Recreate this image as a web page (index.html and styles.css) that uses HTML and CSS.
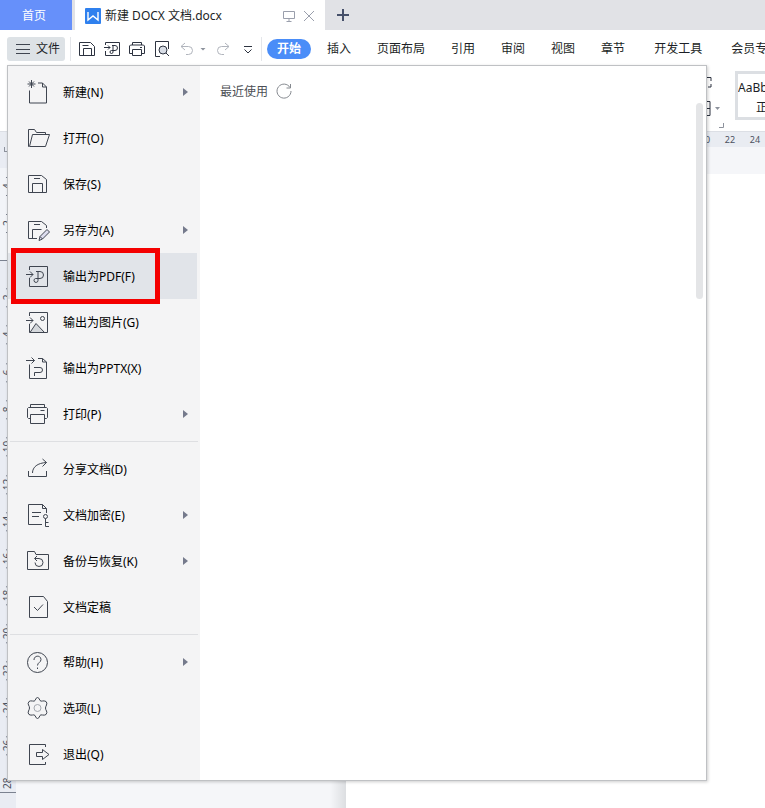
FILE: index.html
```
<!DOCTYPE html>
<html lang="zh-CN">
<head>
    <meta charset="UTF-8">
    <meta name="viewport" content="width=device-width, initial-scale=1.0">
    <title>新建 DOCX 文档.docx</title>
    <link rel="stylesheet" href="styles.css">
</head>
<body>
    <header class="tabs">
        <button class="home-tab" type="button">首页</button>
        <div class="doc-tab">
            <svg class="logo" viewBox="0 0 16 16"><rect width="16" height="16" rx="1" fill="#2f80ee"/><path d="M3 4v8l5-4 5 4V4" fill="none" stroke="#fff" stroke-width="1.4"/></svg>
            <span class="doc-name">新建 DOCX 文档.docx</span>
            <svg class="tab-icon" viewBox="0 0 12 12"><path d="M.5 1.5h11v7H.5zM6 8.5v3M3.5 11.5h5"/></svg>
            <button class="close" type="button" aria-label="关闭">
                <svg class="tab-icon" viewBox="0 0 12 12"><path d="M1 1l10 10M11 1L1 11"/></svg>
            </button>
        </div>
        <button class="add-tab" type="button" aria-label="新建标签">
            <svg viewBox="0 0 12 12"><path d="M6 0v12M0 6h12"/></svg>
        </button>
    </header>

    <nav class="menubar">
        <button class="file-btn" type="button">
            <svg viewBox="0 0 14 12"><path d="M0 1.5h14M0 6.5h14M0 10.5h14"/></svg>
            文件
        </button>
        <div class="quick">
            <button type="button" aria-label="保存"><svg viewBox="0 0 16 16"><path d="M.5 1.5h11l4 4v9H.5zM4.5 14.5v-7h8v7M3.5 4.5h6"/></svg></button>
            <button type="button" aria-label="输出为PDF"><svg viewBox="0 0 16 16"><path d="M1.500 4V1.500h14v13h-14V10M0 6.500h6M4 4.500l2 2-2 2M8 4.500h3a2.500 2.500 0 0 1 0 5H7.500a1.500 1.500 0 1 0 1.500 1.500V4.500"/></svg></button>
            <button type="button" aria-label="打印"><svg viewBox="0 0 16 16"><path d="M3.500 4V1.500h9V4M3.500 12.500h-3V5l1-1h13l1 1v7.500h-3M3.500 8.500h9v6h-9zM11 6.500h2"/></svg></button>
            <button type="button" aria-label="打印预览"><svg viewBox="0 0 16 16"><path d="M6 15.500H1.500v-15h13V8M12 12l3 3"/><circle cx="9" cy="9" r="4" fill="#d8dde6"/></svg></button>
            <button class="pale" type="button" aria-label="撤销"><svg viewBox="0 0 16 16"><path d="M6 2L2 5.500l4 3.500M2 5.500h7.500a4 4 0 0 1 0 8H7"/></svg></button>
            <button class="caret" type="button" aria-label="撤销列表"></button>
            <button class="pale" type="button" aria-label="恢复"><svg viewBox="0 0 16 16"><path d="M10 2l4 3.500L10 9M14 5.500H6.500a4 4 0 0 0 0 8H9"/></svg></button>
            <button type="button" aria-label="更多"><svg viewBox="0 0 16 16"><path d="M4 5.500h8M4.500 8.500L8 12l3.500-3.500"/></svg></button>
        </div>
        <div class="ribbon-tabs">
            <a class="current" href="#">开始</a>
            <a href="#">插入</a>
            <a href="#">页面布局</a>
            <a href="#">引用</a>
            <a href="#">审阅</a>
            <a href="#">视图</a>
            <a href="#">章节</a>
            <a class="wide" href="#">开发工具</a>
            <a class="wide" href="#">会员专</a>
        </div>
    </nav>

    <main class="workspace">
        <section class="ribbon">
            <svg class="ribbon-tools" viewBox="0 0 28 64"><path d="M5 12.500h6V16M11 19v3H8M0 36.500h10v14H0M5 43.500h5"/><path class="grey" d="M23.500 58v4.500H19"/><path class="down" d="M15 42h5l-2.500 3z"/></svg>
            <button class="style-card" type="button"><span>AaBb</span><span class="style-name">正</span></button>
        </section>
        <div class="ruler-top"><span>20</span><span>22</span><span>24</span></div>
        <div class="desk">
            <div class="ruler-left">
                <div class="tab-stop"></div>
                <div class="margin-part"><i>4</i><i>2</i></div>
                <div class="text-part">
                    <i>2</i><i>4</i><i>6</i><i>8</i><i>10</i><i>12</i><i>14</i>
                    <i>16</i><i>18</i><i>20</i><i>22</i><i>24</i><i>26</i><i>28</i>
                </div>
            </div>
            <div class="gutter"></div>
            <div class="paper"></div>
        </div>

        <div class="file-menu">
            <div class="commands">
                <button class="item more" type="button"><svg viewBox="0 0 26 26"><path d="M4.500 11.500V24h17V8l-4-4H13M17.500 4v4h4M6.500 1v8M2.500 5h8M4 2.500l5 5M9 2.500l-5 5"/></svg><span>新建(N)</span></button>
                <button class="item" type="button"><svg viewBox="0 0 26 26"><path d="M4 21.500h-.500v-17h6l2 3h9v2M4.500 21.500L7.500 9.500h17l-4 12z"/></svg><span>打开(O)</span></button>
                <button class="item" type="button"><svg viewBox="0 0 26 26"><path d="M3.500 4.500h13l5 4v13h-18zM7.500 21.500v-9h10v9M9 7.500h6"/></svg><span>保存(S)</span></button>
                <button class="item more" type="button"><svg viewBox="0 0 26 26"><path d="M12 21.500H3.500v-17h13l5 4V11M7.500 21.500v-9h9M9 7.500h6"/><path d="M14 23.500l1-4 7-7 2.500 2.500-7 7zM15 19.500l2.500 2.500" fill="#dde"/></svg><span>另存为(A)</span></button>
                <button class="item active" type="button"><svg viewBox="0 0 26 26"><path d="M4.500 7V3.500h18v20h-18V15M1 11.500h7M5 8.500l3 3-3 3M11 8.500h4a3.500 3.500 0 0 1 0 7h-4.500a2 2 0 1 0 2.500 2V8.500"/></svg><span>输出为PDF(F)</span></button>
                <button class="item" type="button"><svg viewBox="0 0 26 26"><path d="M5 23.500l6-9 8.500 9z" fill="#d5d8dc"/><path d="M4.500 7V3.500h18v20h-18V15M1 11.500h7M5 8.500l3 3-3 3"/><circle cx="17.500" cy="9.500" r="2"/></svg><span>输出为图片(G)</span></button>
                <button class="item" type="button"><svg viewBox="0 0 26 26"><path d="M4.500 9.500v14h17V7l-4-3.500H13M17.500 3.500V7h4M1 5.500h8.500M6.500 2.500l3 3-3 3M9 12.500h6a2 2 0 0 1 0 5H9.500v3.500"/></svg><span>输出为PPTX(X)</span></button>
                <button class="item more" type="button"><svg viewBox="0 0 26 26"><path d="M5.500 6.500v-3h14v3M5.500 17.500h-2l-1-1v-9l1-1h18l1 1v9l-1 1h-2M5.500 13.500h14v9h-14zM15.500 9.500h4"/></svg><span>打印(P)</span></button>
                <hr>
                <button class="item" type="button"><svg viewBox="0 0 26 26"><path d="M3.500 15v5.500h18V15M7.500 17c0-6 5-10 14-10.500M17.500 3l4 3.500-4 4"/></svg><span>分享文档(D)</span></button>
                <button class="item more" type="button"><svg viewBox="0 0 26 26"><path d="M17 22.500H3.500v-20h14l4 4V11M17.500 2.500v4h4M7 10.500h9M7 14.500h7"/><circle cx="20.500" cy="14.500" r="2"/><path d="M20.500 16.500v8M20.500 20.500h3M20.500 24.500h3.500"/></svg><span>文档加密(E)</span></button>
                <button class="item more" type="button"><svg viewBox="0 0 26 26"><path d="M2.500 21.500v-18h7l1.500 3h12.500v15zM10 10.500h4a4 4 0 1 1-4 4M12 8l-2.500 2.500L12 13"/></svg><span>备份与恢复(K)</span></button>
                <button class="item" type="button"><svg viewBox="0 0 26 26"><path d="M4.500 2.500h14l4 5v16h-18zM9 13l3.500 3.500 5.500-6"/></svg><span>文档定稿</span></button>
                <hr>
                <button class="item more" type="button"><svg viewBox="0 0 26 26"><circle cx="12.500" cy="13.500" r="10"/><path d="M9 11c0-5 7-5 7-.500 0 3-3.500 3-3.500 6M12.500 18.500v1.500"/></svg><span>帮助(H)</span></button>
                <button class="item" type="button"><svg viewBox="0 0 26 26"><path d="M10 5.500Q11 2.500 12.500 2.500T15 5.500Q16 6.500 17.500 6T21 6.500Q22.500 8 21.500 10T20.500 13Q20.500 14.500 21.500 16T21 19.500Q19.500 20.500 17.500 20T15 20.500Q14 23.500 12.500 23.500T10 20.500Q9 19.500 7.500 20T4 19.500Q2.500 18 3.500 16T4.500 13Q4.500 11.500 3.500 10T4 6.500Q5.500 5.500 7.500 6T10 5.500z"/><circle class="light" cx="12.500" cy="13" r="3.500"/></svg><span>选项(L)</span></button>
                <button class="item" type="button"><svg viewBox="0 0 26 26"><path d="M20.500 6V3.500h-16v20h16V21M11.500 11.500h6v-3l6.500 5-6.500 5v-3h-6z"/></svg><span>退出(Q)</span></button>
                <div class="highlight"></div>
            </div>
            <div class="recent">
                <div class="recent-head">
                    <span>最近使用</span>
                    <button type="button" aria-label="刷新"><svg viewBox="0 0 16 16"><path d="M14 4.500A7 7 0 1 0 15 8M14.500 1v4h-4"/></svg></button>
                </div>
                <div class="thumb"></div>
            </div>
        </div>
    </main>
</body>
</html>
```
FILE: styles.css
```
* {
    box-sizing: border-box;
}

body {
    margin: 0;
    height: 100vh;
    display: flex;
    flex-direction: column;
    overflow: hidden;
    background: #fff;
    color: #1c1f26;
    font-family: "Noto Sans", "Noto Sans CJK SC", sans-serif;
    font-size: 12px;
    line-height: 20px;
}

button {
    padding: 0;
    border: 0;
    background: none;
    color: inherit;
    font: inherit;
    cursor: pointer;
}

svg {
    display: block;
    flex: none;
    fill: none;
    stroke: #3f4550;
    stroke-width: 1;
}

/* document tabs */
.tabs {
    display: flex;
    flex: none;
    height: 30px;
    background: #e1e2e6;
}

.home-tab {
    width: 72px;
    padding: 2px 4px 0 0;
    background: #6690fa;
    color: #fff;
}

.doc-tab {
    display: flex;
    align-items: center;
    width: 250px;
    margin-left: 3px;
    padding: 2px 10px 0;
    background: #fff;
}

.logo {
    width: 16px;
    height: 16px;
    margin-right: 4px;
    stroke: none;
}

.doc-name {
    flex: 1;
    white-space: nowrap;
}

.tab-icon {
    width: 12px;
    height: 12px;
    stroke: #9a9fac;
}

.close {
    margin-left: 8px;
}

.add-tab {
    width: 36px;
    padding-left: 12px;
}

.add-tab svg {
    width: 12px;
    height: 12px;
    stroke: #46506a;
    stroke-width: 2;
}

/* menu bar */
.menubar {
    display: flex;
    align-items: center;
    flex: none;
    height: 35px;
    padding: 3px 0 0 7px;
}

.file-btn {
    display: flex;
    align-items: center;
    gap: 6px;
    flex: none;
    height: 24px;
    padding: 0 5px 0 9px;
    border-radius: 3px;
    background: #dde2e6;
}

.file-btn svg {
    width: 14px;
    height: 12px;
}

.quick {
    display: flex;
    align-items: center;
    gap: 9px;
    flex: none;
    height: 24px;
    margin-left: 5px;
    padding: 0 5px 0 8px;
    border: solid #e4e6ea;
    border-width: 0 1px;
}

.quick svg {
    width: 16px;
    height: 16px;
    stroke: #2d3340;
}

.quick .pale svg {
    stroke: #b0b4bc;
}

.quick .caret {
    width: 6px;
    height: 3px;
    margin: 0 0 0 -4px;
    background: #8d929c;
    clip-path: polygon(0 0, 100% 0, 50% 100%);
}

.ribbon-tabs {
    display: flex;
    align-items: center;
    gap: 26px;
    margin-left: 5px;
    white-space: nowrap;
}

.ribbon-tabs a {
    color: #1c1f26;
    text-decoration: none;
}

.ribbon-tabs .current {
    margin-right: -10px;
    padding: 0 10px;
    border-radius: 10px;
    background: #4a8df8;
    color: #fff;
    font-weight: bold;
}

.ribbon-tabs .wide {
    margin-left: 3px;
}

/* ribbon, rulers and page */
.workspace {
    position: relative;
    display: flex;
    flex-direction: column;
    flex: 1;
    min-height: 0;
}

.ribbon {
    display: flex;
    justify-content: flex-end;
    flex: none;
    height: 67px;
    border-bottom: 1px solid #dcdfe5;
}

.ribbon-tools {
    width: 28px;
    height: 64px;
    stroke: #2d3340;
}

.ribbon-tools .grey {
    stroke: #8d929c;
}

.ribbon-tools .down {
    fill: #8d929c;
    stroke: none;
}

.style-card {
    display: flex;
    flex-direction: column;
    width: 30px;
    height: 49px;
    margin: 6px 0 0 7px;
    padding-top: 4px;
    border: 3px solid #dcdfe3;
    border-right: 0;
    overflow: hidden;
    white-space: nowrap;
}

.style-name {
    padding-left: 18px;
}

.ruler-top {
    display: flex;
    justify-content: flex-end;
    gap: 11px;
    flex: none;
    height: 15px;
    padding-right: 3px;
    background: #e9ecf2;
    color: #4b5160;
    font-size: 9px;
    line-height: 15px;
}

.ruler-top span {
    width: 14px;
    text-align: center;
}

.desk {
    display: flex;
    flex: 1;
    min-height: 0;
    background: #f5f6f9;
}

.ruler-left {
    display: flex;
    flex-direction: column;
    width: 16px;
    padding-bottom: 15px;
    background: #e9ecf3;
    color: #4b5160;
    font-size: 10px;
    line-height: 14px;
}

.tab-stop {
    width: 5px;
    height: 5px;
    margin: 0 0 16px 4px;
    border: solid #8d929c;
    border-width: 0 0 1px 1px;
}

.margin-part,
.text-part {
    display: grid;
    border-bottom: 1px solid #7b8290;
}

.margin-part {
    grid-auto-rows: 1fr;
    height: 93px;
    padding-bottom: 18px;
    background: #f2f4f8;
}

.text-part {
    flex: 1;
    grid-template-rows: repeat(13, 1fr) 28px;
    padding-top: 18px;
}

.ruler-left i {
    display: flex;
    align-items: center;
    justify-content: center;
    width: 14px;
    background:
        linear-gradient(#7b8290, #7b8290) 6px 25% / 2px 1px no-repeat,
        linear-gradient(#7b8290, #7b8290) 6px 75% / 2px 1px no-repeat;
    font-style: normal;
    writing-mode: vertical-rl;
    transform: rotate(180deg);
}

.text-part i:last-child {
    padding-bottom: 10px;
    background: none;
}

.gutter {
    width: 330px;
    background: linear-gradient(to left, #dcdee1, #f5f6f9 16px);
}

.paper {
    flex: 1;
    margin-top: 27px;
    background: #fff;
}

/* file menu */
.file-menu {
    position: absolute;
    top: 0;
    left: 7px;
    right: 58px;
    display: flex;
    border: 1px solid #bfc1c4;
    background: #fff;
    box-shadow: 1px 1px 3px rgba(0, 0, 0, 0.2);
}

.commands {
    position: relative;
    width: 192px;
    padding: 3px 0;
    background: #f4f4f5;
}

.item {
    display: flex;
    align-items: center;
    gap: 12px;
    width: 189px;
    height: 46px;
    padding: 0 9px 0 17px;
    color: #000;
}

.item svg {
    width: 26px;
    height: 26px;
}

.item span {
    padding-top: 2px;
}

.item svg .light {
    stroke: #a5a9b0;
}

.item.active {
    background: #e1e4e9;
}

.more::after {
    content: "";
    width: 5px;
    height: 8px;
    margin-left: auto;
    background: #757a8c;
    clip-path: polygon(0 0, 100% 50%, 0 100%);
}

.commands hr {
    height: 1px;
    margin: 4px 2px;
    border: 0;
    background: #dedfe2;
}

/* red frame around the PDF command */
.highlight {
    position: absolute;
    top: 182px;
    left: 3px;
    width: 149px;
    height: 56px;
    border: 5px solid #f40000;
}

.recent {
    display: flex;
    flex-direction: column;
    flex: 1;
    padding: 14px 3px 0 20px;
}

.recent-head {
    display: flex;
    align-items: center;
    gap: 8px;
    color: #4c4f55;
}

.recent-head span {
    padding-top: 2px;
}

.recent-head svg {
    width: 16px;
    height: 16px;
    stroke: #85898f;
}

.thumb {
    align-self: flex-end;
    width: 7px;
    height: 196px;
    margin-top: 1px;
    border-radius: 4px;
    background: #e4e5e7;
}
```
